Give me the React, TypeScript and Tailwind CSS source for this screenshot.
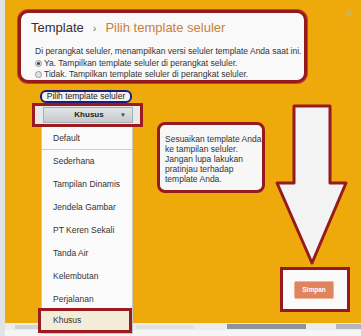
const templates = [
  'Sederhana',
  'Tampilan Dinamis',
  'Jendela Gambar',
  'PT Keren Sekali',
  'Tanda Air',
  'Kelembutan',
  'Perjalanan',
];

function Radio({ checked }: { checked?: boolean }) {
  return (
    <span className="mr-[2px] flex h-[7px] w-[7px] shrink-0 items-center justify-center rounded-full border border-[#9a9a9a] bg-[#e2e2e2]">
      {checked && <span className="h-[3px] w-[3px] rounded-full bg-[#3a3a3a]" />}
    </span>
  );
}

function ArrowDown() {
  return (
    <svg width="73" height="162" viewBox="0 0 73 162" className="block">
      <path
        d="M19 2 L55 2 L55 79 L71 79 L37 159 L2 79 L19 79 Z"
        fill="#f3f3f3"
        stroke="#961b1f"
        strokeWidth="3"
        strokeLinejoin="round"
      />
    </svg>
  );
}

export default function App() {
  return (
    <div className="flex h-[336px] w-[361px] overflow-hidden bg-[#f4f4f4] font-['Liberation_Sans',Arial,sans-serif]">
      <div className="w-[5px] shrink-0 bg-[#e2e3e4]" />

      <div className="flex flex-1 flex-col">
        <div className="relative h-[323px] shrink-0 bg-[#eeaa0b]">
          {/* close */}
          <svg width="8" height="8" viewBox="0 0 8 8" className="absolute right-[9px] top-[9px]">
            <path d="M1 1 L7 7 M7 1 L1 7" stroke="#c9b17a" strokeWidth="1.4" />
          </svg>

          {/* header box */}
          <div className="ml-[13px] pt-[10px]">
            <div className="h-[73px] w-[289px] rounded-[10px] border-[3px] border-[#951a1e] bg-[#f9f9f9] pt-[7px] shadow-[0_0_0_1px_#c9452a]">
              <div className="flex items-baseline pl-[10px] text-[13px] leading-[16px]">
                <span className="text-[#333]">Template</span>
                <span className="mx-[9px] text-[11px] text-[#777]">›</span>
                <span className="text-[#c7803c]">Pilih template seluler</span>
              </div>
              <div className="mt-[10px] pl-[14px] text-[8.5px] leading-[11.5px] text-[#333]">
                <p>Di perangkat seluler, menampilkan versi seluler template Anda saat ini.</p>
                <p className="flex items-center">
                  <Radio checked />
                  Ya. Tampilkan template seluler di perangkat seluler.
                </p>
                <p className="flex items-center">
                  <Radio />
                  Tidak. Tampilkan template seluler di perangkat seluler.
                </p>
              </div>
            </div>
          </div>

          <div className="mt-[7px] flex items-start">
            {/* template picker */}
            <div className="relative z-10 ml-[27px] w-[111px]">
              <div className="ml-[8px] flex h-[13px] w-[92px] items-center justify-center rounded-[6px] border-2 border-[#1b1b86] bg-[#f2f2f2] text-[8.5px] text-[#222]">
                Pilih template seluler
              </div>
              <div className="flex h-[24px] items-center border-[3px] border-[#9a1b20] bg-[#e9e9e9] pl-[8px]">
                <div className="flex h-[16px] w-[90px] items-center border border-[#a9b0b4] bg-gradient-to-b from-[#e3e6e8] to-[#c3c9cd] px-[6px]">
                  <span className="flex-1 pl-[8px] text-center text-[8px] font-bold text-[#222]">Khusus</span>
                  <span className="text-[6px] text-[#444]">▼</span>
                </div>
              </div>
              <div className="ml-[9px] w-[92px] border border-t-0 border-[#c7c7c7] bg-[#fbfbfb] text-[8.5px] text-[#333]">
                <div className="flex h-[23px] items-center border-b border-[#cfcfcf] pl-[11px]">Default</div>
                {templates.map((name) => (
                  <div key={name} className="flex h-[23px] items-center pl-[11px]">
                    {name}
                  </div>
                ))}
                <div className="-ml-[4px] -mt-[3px] flex h-[25px] items-center border-[3px] border-[#9a1b20] bg-[#f3ecd9] pl-[12px]">
                  Khusus
                </div>
              </div>
            </div>

            {/* hint */}
            <div className="ml-[14px] mt-[32px] h-[71px] w-[108px] rounded-[8px] border-[3px] border-[#951a1e] bg-[#f7f7f7] pl-[5px] pt-[9px] text-[8.5px] leading-[10px] text-[#333]">
              Sesuaikan template Anda
              <br />
              ke tampilan seluler.
              <br />
              Jangan lupa lakukan
              <br />
              pratinjau terhadap
              <br />
              template Anda.
            </div>

            {/* arrow + save */}
            <div className="ml-[10px] mt-[14px] w-[75px]">
              <ArrowDown />
              <div className="ml-[5px] mt-[1px] h-[45px] w-[70px] border-[3px] border-[#951a1e] bg-[#fafafa] pl-[11px] pt-[11px]">
                <div className="flex h-[18px] w-[40px] items-center justify-center rounded-[2px] border border-[#f0b394] bg-[#df845d] text-[6.5px] font-bold text-white">
                  Simpan
                </div>
              </div>
            </div>
          </div>
        </div>

        {/* page behind, bottom */}
        <div className="flex h-[7px] items-center bg-[#ebeced]">
          <div className="ml-[10px] h-[4px] w-[26px] bg-[#cfd3d7]" />
          <div className="ml-[95px] h-[4px] w-[58px] bg-[#dfe0e2]" />
          <div className="ml-[33px] h-[5px] w-[79px] bg-[#8c939b]" />
          <div className="ml-[30px] h-[5px] w-[26px] bg-[#b4b7bd]" />
        </div>
        <div className="flex-1 bg-[#f5f5f5]" />
      </div>
    </div>
  );
}
